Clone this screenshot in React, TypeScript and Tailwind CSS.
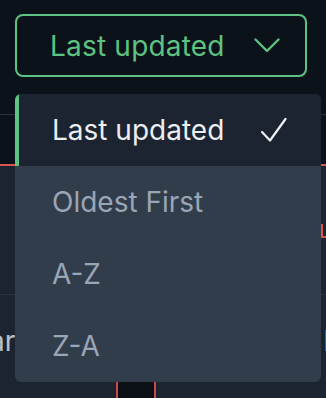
import React from "react";

const font = { fontFamily: "Inter, 'Noto Sans', sans-serif" };

function Chevron() {
  return (
    <svg width="26" height="16" viewBox="0 0 26 16" fill="none" className="shrink-0">
      <polyline points="1.5,1.5 13,13 24.5,1.5" stroke="#5ec282" strokeWidth="2.4" strokeLinecap="round" strokeLinejoin="round" />
    </svg>
  );
}

function Check() {
  return (
    <svg width="28" height="26" viewBox="0 0 28 26" fill="none" className="shrink-0">
      <polyline points="2,15 10,23.5 25.5,2" stroke="#eef0f3" strokeWidth="2.2" strokeLinecap="round" strokeLinejoin="round" />
    </svg>
  );
}

export default function App() {
  const items = ["Oldest First", "A-Z", "Z-A"];
  return (
    <div className="relative w-[326px] h-[398px] overflow-hidden bg-[#0c1219]" style={font}>
      {/* background table */}
      <div className="flex flex-col h-full">
        <div className="h-[114px] shrink-0 pt-[14px] pl-[15px]">
          <button className="w-[292px] h-[63px] rounded-lg border-2 border-[#5ec282] flex items-center pl-[33px] gap-[29px] text-[28px] leading-none text-[#5ec282] tracking-[0.2px]">
            <span>Last updated</span>
            <Chevron />
          </button>
        </div>
        <div className="h-px bg-[#2a3441] shrink-0" />
        <div className="h-[49px] shrink-0" />
        <div className="h-[2px] bg-[#d9534f] shrink-0" />
        <div className="flex-1 bg-[#1b2430] flex flex-col">
          <div className="h-[128px] shrink-0" />
          <div className="h-px bg-[#2b3542] shrink-0" />
          <div className="h-[87px] shrink-0 flex items-center justify-between text-[28px] text-[#b9c0ca] pt-[4px]">
            <span className="-ml-[11px]">ar</span>
            <span className="-mr-[14px]">h</span>
          </div>
          <div className="flex-1 pl-[116px]">
            <div className="w-[40px] h-full bg-[#0b1016] border-x-2 border-[#d0474a]" />
          </div>
        </div>
      </div>

      {/* red bracket at right */}
      <div className="absolute left-[321px] top-[224px] w-[6px] h-[14px] border-l-2 border-b-2 border-[#d9534f]" />

      {/* dropdown menu */}
      <div className="absolute left-[15px] top-[94px] w-[306px] rounded-md overflow-hidden bg-[#323d4c] text-[28px] leading-none">
        <div className="h-[72px] flex items-center justify-between bg-[#1b2430] border-l-4 border-[#5ec282] pl-[33px] pr-[33px] text-[#eceef2]">
          <span>Last updated</span>
          <Check />
        </div>
        {items.map((t) => (
          <div key={t} className="h-[72px] flex items-center pl-[37px] text-[#9aa5b5]">
            {t}
          </div>
        ))}
      </div>
    </div>
  );
}
